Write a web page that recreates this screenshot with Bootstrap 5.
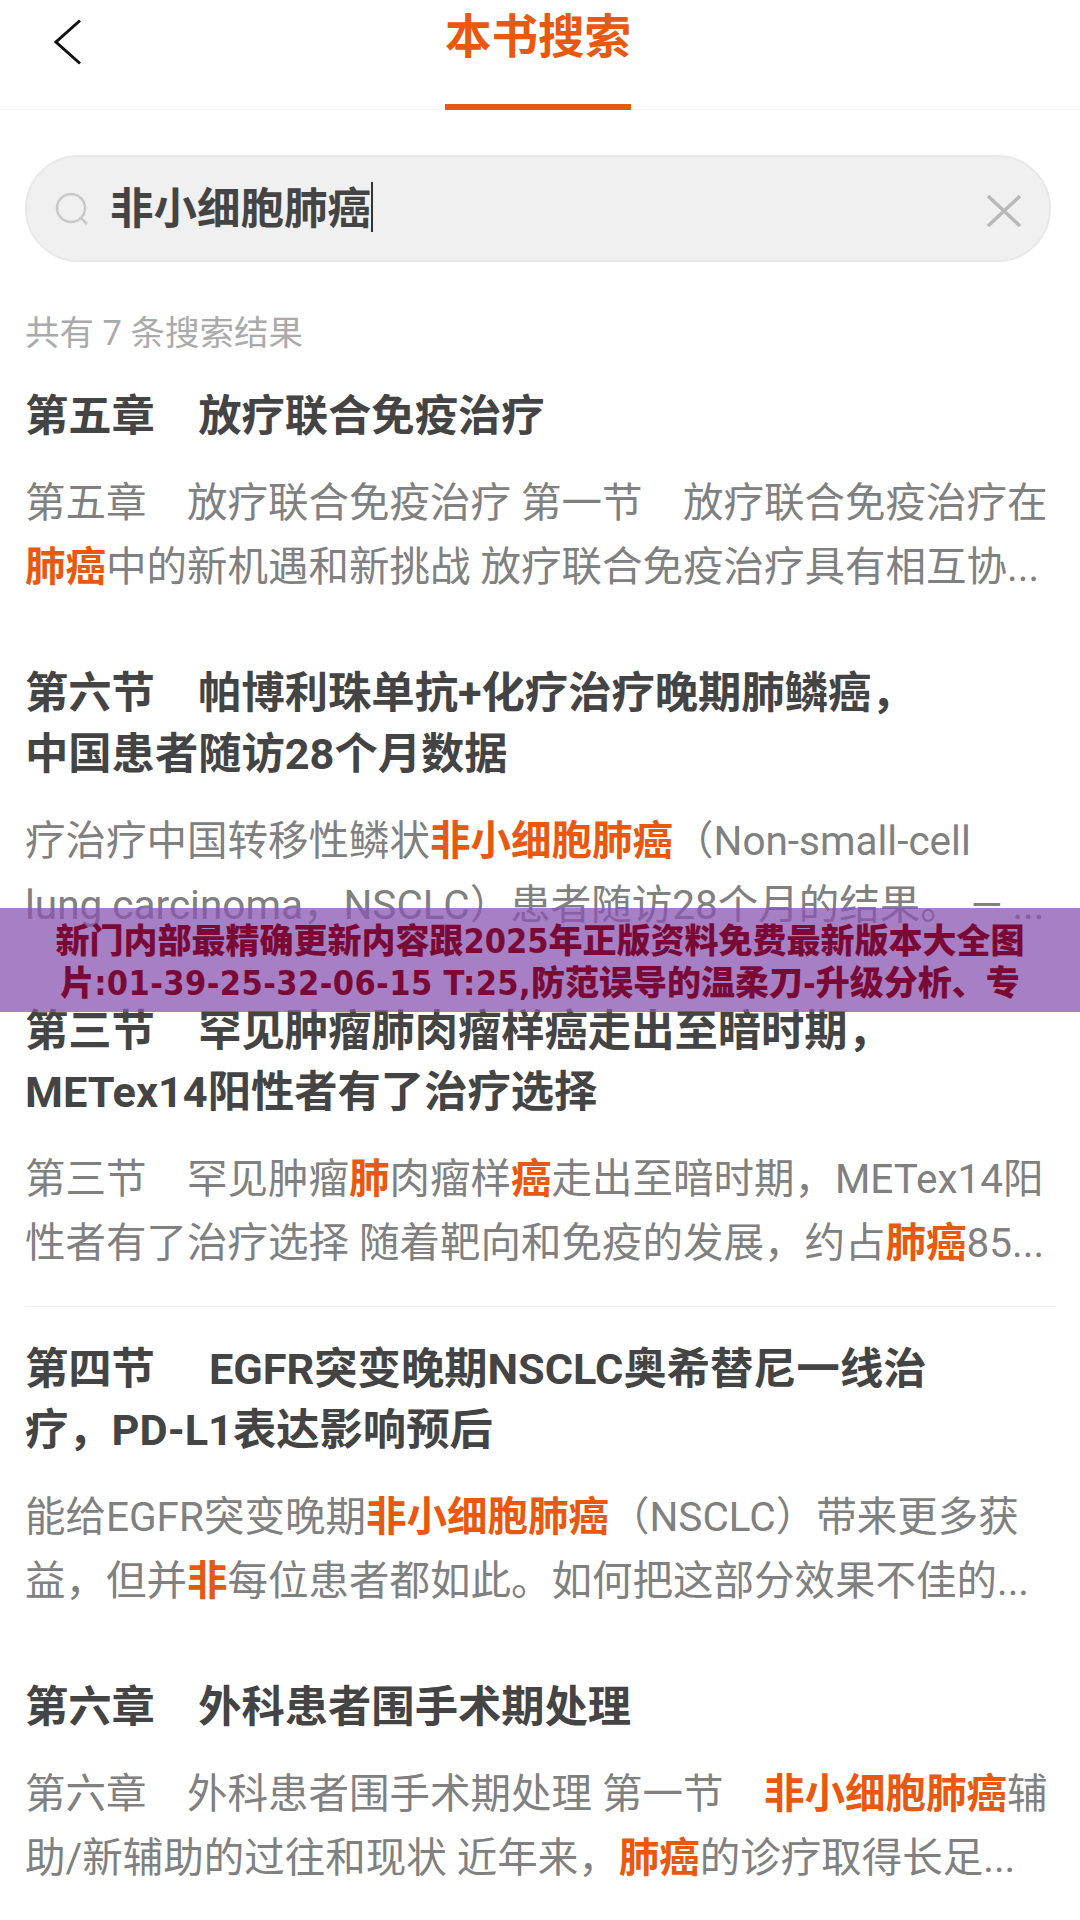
<!DOCTYPE html>
<html lang="zh"><head><meta charset="utf-8">
<link href="https://cdn.jsdelivr.net/npm/bootstrap@5.3.0/dist/css/bootstrap.min.css" rel="stylesheet">
<style>
html,body{height:1920px;overflow:hidden}
body{font-family:Roboto,"Noto Sans CJK SC",sans-serif;background:#fff;position:relative}
.top-bar{height:110px;border-bottom:1px solid #f6f6f6}
.back-mark{left:54px;top:19px;width:28px;height:46px}
.tab-title{height:110px;width:186px;margin-left:445px;border-bottom:6px solid #e8590f;color:#e8590f;font-size:46.500px;font-weight:700;line-height:75px;text-align:center}
.search-pill{margin:45px 29px 0 25px;height:107px;background:#f0f0f0;border:2px solid #e8e8e8;border-radius:54px;padding-left:28px}
.query-text{font-size:43.500px;font-weight:700;color:#444;line-height:56px;border-right:2px solid #333;margin-left:21px;margin-top:-4px;height:50px}
.close-mark{margin-right:27px;margin-top:4px}
.hint-line{margin:46px 25px 0;font-size:34.500px;color:#aaa;line-height:51px;height:46px}
.result-row{margin:0 24px 0 25px;padding-bottom:64px}
.result-row.ruled{padding-bottom:31px;border-bottom:1px solid #f2f2f2;margin-bottom:32px}
.result-head{font-size:43.300px;font-weight:700;color:#444;line-height:61px;white-space:nowrap}
.result-body{font-size:40.500px;color:#808080;line-height:64px;margin-top:24px;white-space:nowrap}
.result-body b{color:#e8590f;font-weight:700}
.first-row{margin-top:32px}
.promo-strip{left:0;right:0;top:908px;height:104px;background:rgba(138,84,176,.75);color:#7a0a35;font-family:"DejaVu Sans Condensed","Noto Sans CJK SC",sans-serif;font-size:34px;font-weight:900;line-height:42px;text-align:center;padding-top:12px;white-space:nowrap}
.promo-nums{letter-spacing:.4px}
</style></head>
<body>
<div class="top-bar position-relative">
<svg class="back-mark position-absolute" viewBox="0 0 28 46"><path d="M26 1.500 L2 23 L26 44.500" fill="none" stroke="#111" stroke-width="3"/></svg>
<div class="tab-title">本书搜索</div>
</div>
<div class="search-pill d-flex align-items-center">
<svg width="34" height="32" viewBox="0 0 34 32"><circle cx="16" cy="15" r="14" fill="none" stroke="#c8c8c8" stroke-width="2.500"/><path d="M26 25l6 6" stroke="#c8c8c8" stroke-width="2.500"/></svg>
<div class="query-text">非小细胞肺癌</div>
<svg class="close-mark ms-auto" width="36" height="32" viewBox="0 0 36 32"><path d="M2 1L34 31M34 1L2 31" stroke="#b8b8b8" stroke-width="3.500"/></svg>
</div>
<div class="hint-line">共有 7 条搜索结果</div>
<div class="result-row first-row">
<div class="result-head">第五章　放疗联合免疫治疗</div>
<div class="result-body">第五章　放疗联合免疫治疗 第一节　放疗联合免疫治疗在<br><b>肺癌</b>中的新机遇和新挑战 放疗联合免疫治疗具有相互协...</div>
</div>
<div class="result-row">
<div class="result-head">第六节　帕博利珠单抗+化疗治疗晚期肺鳞癌，<br>中国患者随访28个月数据</div>
<div class="result-body">疗治疗中国转移性鳞状<b>非小细胞肺癌</b>（Non-small-cell<br>lung carcinoma，NSCLC）患者随访28个月的结果。 — ...</div>
</div>
<div class="result-row ruled">
<div class="result-head">第三节　罕见肿瘤肺肉瘤样癌走出至暗时期，<br>METex14阳性者有了治疗选择</div>
<div class="result-body">第三节　罕见肿瘤<b>肺</b>肉瘤样<b>癌</b>走出至暗时期，METex14阳<br>性者有了治疗选择 随着靶向和免疫的发展，约占<b>肺癌</b>85...</div>
</div>
<div class="result-row">
<div class="result-head">第四节　 EGFR突变晚期NSCLC奥希替尼一线治<br>疗，PD-L1表达影响预后</div>
<div class="result-body">能给EGFR突变晚期<b>非小细胞肺癌</b>（NSCLC）带来更多获<br>益，但并<b>非</b>每位患者都如此。如何把这部分效果不佳的...</div>
</div>
<div class="result-row">
<div class="result-head">第六章　外科患者围手术期处理</div>
<div class="result-body">第六章　外科患者围手术期处理 第一节　<b>非小细胞肺癌</b>辅<br>助/新辅助的过往和现状 近年来，<b>肺癌</b>的诊疗取得长足...</div>
</div>
<div class="promo-strip position-absolute">新门内部最精确更新内容跟2025年正版资料免费最新版本大全图<br>片<span class="promo-nums">:01-39-25-32-06-15 T:25,</span>防范误导的温柔刀-升级分析、专</div>
<script src="https://cdn.jsdelivr.net/npm/bootstrap@5.3.0/dist/js/bootstrap.bundle.min.js"></script>
</body></html>
